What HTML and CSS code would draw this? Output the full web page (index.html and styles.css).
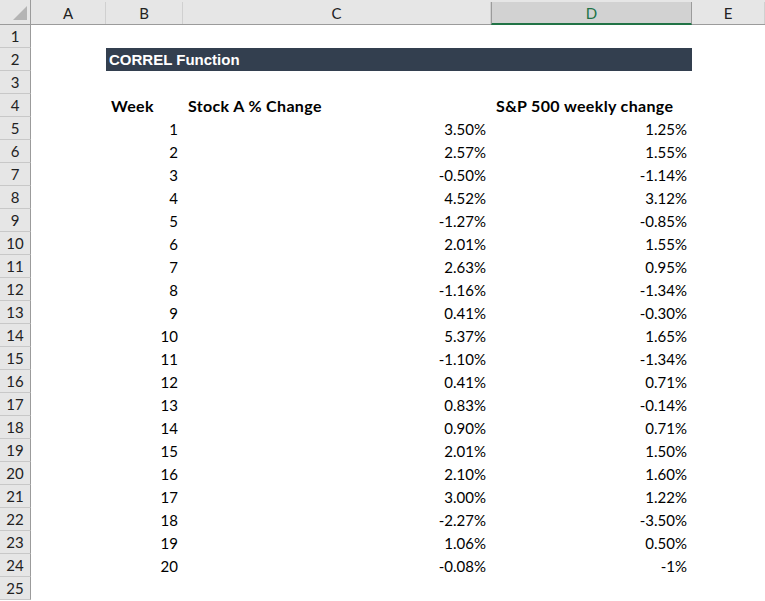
FILE: index.html
```html
<!DOCTYPE html>
<html>
<head>
<meta charset="utf-8">
<link rel="stylesheet" href="styles.css">
</head>
<body>
<div class="sheet">
  <div class="row head">
    <div class="corner"><span class="tri"></span></div>
    <div class="col">A</div>
    <div class="col">B</div>
    <div class="col">C</div>
    <div class="col sel">D</div>
    <div class="col">E</div>
  </div>
  <div class="row"><div class="rh">1</div><div class="c"></div><div class="c"></div><div class="c"></div><div class="c"></div><div class="c"></div></div>
  <div class="row"><div class="rh">2</div><div class="c"></div><div class="title">CORREL Function</div><div class="c"></div></div>
  <div class="row"><div class="rh">3</div><div class="c"></div><div class="c"></div><div class="c"></div><div class="c"></div><div class="c"></div></div>
  <div class="row"><div class="rh">4</div><div class="c"></div><div class="c b">Week</div><div class="c b">Stock A % Change</div><div class="c b">S&amp;P 500 weekly change</div><div class="c"></div></div>
  <div class="row"><div class="rh">5</div><div class="c"></div><div class="c r">1</div><div class="c r">3.50%</div><div class="c r">1.25%</div><div class="c"></div></div>
  <div class="row"><div class="rh">6</div><div class="c"></div><div class="c r">2</div><div class="c r">2.57%</div><div class="c r">1.55%</div><div class="c"></div></div>
  <div class="row"><div class="rh">7</div><div class="c"></div><div class="c r">3</div><div class="c r">-0.50%</div><div class="c r">-1.14%</div><div class="c"></div></div>
  <div class="row"><div class="rh">8</div><div class="c"></div><div class="c r">4</div><div class="c r">4.52%</div><div class="c r">3.12%</div><div class="c"></div></div>
  <div class="row"><div class="rh">9</div><div class="c"></div><div class="c r">5</div><div class="c r">-1.27%</div><div class="c r">-0.85%</div><div class="c"></div></div>
  <div class="row"><div class="rh">10</div><div class="c"></div><div class="c r">6</div><div class="c r">2.01%</div><div class="c r">1.55%</div><div class="c"></div></div>
  <div class="row"><div class="rh">11</div><div class="c"></div><div class="c r">7</div><div class="c r">2.63%</div><div class="c r">0.95%</div><div class="c"></div></div>
  <div class="row"><div class="rh">12</div><div class="c"></div><div class="c r">8</div><div class="c r">-1.16%</div><div class="c r">-1.34%</div><div class="c"></div></div>
  <div class="row"><div class="rh">13</div><div class="c"></div><div class="c r">9</div><div class="c r">0.41%</div><div class="c r">-0.30%</div><div class="c"></div></div>
  <div class="row"><div class="rh">14</div><div class="c"></div><div class="c r">10</div><div class="c r">5.37%</div><div class="c r">1.65%</div><div class="c"></div></div>
  <div class="row"><div class="rh">15</div><div class="c"></div><div class="c r">11</div><div class="c r">-1.10%</div><div class="c r">-1.34%</div><div class="c"></div></div>
  <div class="row"><div class="rh">16</div><div class="c"></div><div class="c r">12</div><div class="c r">0.41%</div><div class="c r">0.71%</div><div class="c"></div></div>
  <div class="row"><div class="rh">17</div><div class="c"></div><div class="c r">13</div><div class="c r">0.83%</div><div class="c r">-0.14%</div><div class="c"></div></div>
  <div class="row"><div class="rh">18</div><div class="c"></div><div class="c r">14</div><div class="c r">0.90%</div><div class="c r">0.71%</div><div class="c"></div></div>
  <div class="row"><div class="rh">19</div><div class="c"></div><div class="c r">15</div><div class="c r">2.01%</div><div class="c r">1.50%</div><div class="c"></div></div>
  <div class="row"><div class="rh">20</div><div class="c"></div><div class="c r">16</div><div class="c r">2.10%</div><div class="c r">1.60%</div><div class="c"></div></div>
  <div class="row"><div class="rh">21</div><div class="c"></div><div class="c r">17</div><div class="c r">3.00%</div><div class="c r">1.22%</div><div class="c"></div></div>
  <div class="row"><div class="rh">22</div><div class="c"></div><div class="c r">18</div><div class="c r">-2.27%</div><div class="c r">-3.50%</div><div class="c"></div></div>
  <div class="row"><div class="rh">23</div><div class="c"></div><div class="c r">19</div><div class="c r">1.06%</div><div class="c r">0.50%</div><div class="c"></div></div>
  <div class="row"><div class="rh">24</div><div class="c"></div><div class="c r">20</div><div class="c r">-0.08%</div><div class="c r">-1%</div><div class="c"></div></div>
  <div class="row"><div class="rh">25</div><div class="c"></div><div class="c"></div><div class="c"></div><div class="c"></div><div class="c"></div></div>
</div>
</body>
</html>
```

FILE: styles.css
```css
html, body {
  margin: 0;
  padding: 0;
  background: #ffffff;
}

.sheet {
  width: 765px;
  height: 601px;
  overflow: hidden;
  font-family: Lato, "Open Sans", sans-serif;
  font-size: 15px;
  color: #000;
}

.row {
  display: grid;
  grid-template-columns: 31px 75px 77px 308px 201px 73px;
  height: 23px;
}

.row.head {
  height: 25px;
  background: #e6e6e6;
  box-sizing: border-box;
  border-bottom: 1px solid #9b9b9b;
}

.corner {
  position: relative;
  border-right: 1px solid #9b9b9b;
  box-sizing: border-box;
}

.tri {
  position: absolute;
  right: 3px;
  bottom: 4px;
  width: 0;
  height: 0;
  border-left: 14px solid transparent;
  border-bottom: 14px solid #b4b4b4;
}

.col {
  display: flex;
  align-items: center;
  justify-content: center;
  margin-top: 2px;
  font-size: 15px;
  color: #222;
  border-right: 1px solid #d0d0d0;
  box-sizing: border-box;
}

.col.sel {
  background: #d2d2d2;
  color: #217346;
  border-bottom: 2px solid #217346;
  border-left: 1px solid #9b9b9b;
  border-right: 1px solid #9b9b9b;
  margin-bottom: -1px;
}

.rh {
  display: flex;
  align-items: center;
  justify-content: center;
  background: #e6e6e6;
  border-right: 1px solid #9b9b9b;
  border-bottom: 1px solid #c8c8c8;
  box-sizing: border-box;
  font-size: 15px;
  color: #222;
}

.c {
  display: flex;
  align-items: center;
  padding: 0 4px 0 4px;
  white-space: nowrap;
  overflow: visible;
}

.c.r {
  justify-content: flex-end;
  padding-right: 5px;
}

.c.b {
  font-weight: 700;
  font-size: 16px;
  letter-spacing: 0.35px;
  padding-left: 5px;
}

.title {
  grid-column: 3 / span 3;
  background: #333f4f;
  color: #ffffff;
  font-family: "Liberation Sans", Arial, sans-serif;
  font-weight: 700;
  font-size: 15px;
  display: flex;
  align-items: center;
  padding-left: 3px;
}
```
